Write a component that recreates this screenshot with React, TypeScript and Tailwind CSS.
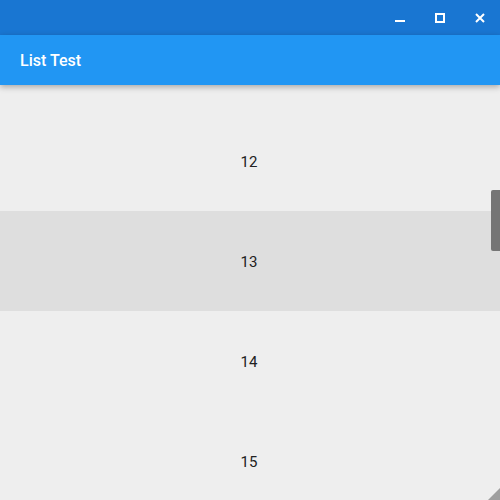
import React from 'react'

const rows = [12, 13, 14, 15]

export default function App() {
  return (
    <div className="w-[500px] h-[500px] flex flex-col bg-[#eeeeee] overflow-hidden relative" style={{ fontFamily: 'Roboto, "Liberation Sans", sans-serif' }}>
      {/* window title bar */}
      <div className="h-[35px] shrink-0 bg-[#1976d2] flex justify-end items-center">
        <div className="w-10 h-[35px] flex items-center justify-center">
          <div className="w-[10px] h-[2px] bg-white mt-[6px]" />
        </div>
        <div className="w-10 h-[35px] flex items-center justify-center">
          <div className="w-[10px] h-[10px] border-2 border-white" />
        </div>
        <div className="w-10 h-[35px] flex items-center justify-center">
          <svg width="10" height="10" viewBox="0 0 10 10">
            <path d="M1 1L9 9M9 1L1 9" stroke="white" strokeWidth="2" />
          </svg>
        </div>
      </div>

      {/* app bar */}
      <div className="h-[50px] shrink-0 bg-[#2196f3] flex items-center px-5 pt-[2px] shadow-[0_2px_6px_rgba(0,0,0,0.3)] z-10">
        <span className="text-white text-[16px] font-medium leading-5">List Test</span>
      </div>

      {/* list, scrolled so row 11 is mostly under the app bar */}
      <div className="flex-1 overflow-hidden relative">
        <div className="flex flex-col">
          <div className="h-[26px] shrink-0 bg-[#eeeeee]" />
          {rows.map(n => (
            <div
              key={n}
              className={`h-[100px] shrink-0 flex items-center justify-center pt-[2px] pr-[2px] text-[15px] text-[#212121] ${n === 13 ? 'bg-[#dedede]' : 'bg-[#eeeeee]'}`}
            >
              {n}
            </div>
          ))}
        </div>
        <div className="absolute right-0 top-[105px] w-[9px] h-[61px] bg-[#757575] rounded-l-[2px]" />
        <svg className="absolute right-0 bottom-0" width="12" height="12" viewBox="0 0 12 12">
          <path d="M12 0L12 12L0 12Z" fill="#9e9e9e" />
        </svg>
      </div>
    </div>
  )
}
